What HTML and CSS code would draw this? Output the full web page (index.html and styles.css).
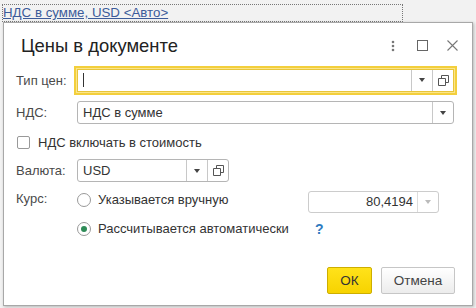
FILE: index.html
```html
<!DOCTYPE html>
<html lang="ru">
<head>
<meta charset="UTF-8">
<title>Цены в документе</title>
<link rel="stylesheet" href="styles.css">
</head>
<body>

<div class="topbar">
  <a class="link" href="#">НДС в сумме, USD &lt;Авто&gt;</a>
</div>

<div class="dialog">
  <div class="head">
    <div class="title">Цены в документе</div>
    <div class="tools">
      <span class="tool">
        <svg width="4" height="12" viewBox="0 0 4 12"><circle cx="2" cy="2" r="1.3" fill="#777"/><circle cx="2" cy="6" r="1.3" fill="#777"/><circle cx="2" cy="10" r="1.3" fill="#777"/></svg>
      </span>
      <span class="tool">
        <svg width="11" height="11" viewBox="0 0 11 11"><rect x="0.5" y="0.5" width="10" height="10" fill="none" stroke="#666"/></svg>
      </span>
      <span class="tool">
        <svg width="11" height="11" viewBox="0 0 11 11"><path d="M0.5 0.5L10.5 10.5M10.5 0.5L0.5 10.5" stroke="#777" stroke-width="1.1"/></svg>
      </span>
    </div>
  </div>

  <div class="form">
    <div class="row r1">
      <label class="lbl">Тип цен:</label>
      <div class="field focus wide">
        <div class="val"><span class="caret"></span></div>
        <span class="btn"><i class="arrow"></i></span>
        <span class="btn"><svg width="11" height="11" viewBox="0 0 11 11"><path d="M3.5 3.5V0.5H10.5V7.5H7.5M0.5 3.5H7.5V10.5H0.5Z" fill="none" stroke="#555"/></svg></span>
      </div>
    </div>

    <div class="row r2">
      <label class="lbl">НДС:</label>
      <div class="field wide">
        <div class="val">НДС в сумме</div>
        <span class="btn"><i class="arrow"></i></span>
      </div>
    </div>

    <div class="row r3">
      <span class="check"></span>
      <span class="text">НДС включать в стоимость</span>
    </div>

    <div class="row r4">
      <label class="lbl">Валюта:</label>
      <div class="field small">
        <div class="val">USD</div>
        <span class="btn"><i class="arrow"></i></span>
        <span class="btn"><svg width="11" height="11" viewBox="0 0 11 11"><path d="M3.5 3.5V0.5H10.5V7.5H7.5M0.5 3.5H7.5V10.5H0.5Z" fill="none" stroke="#555"/></svg></span>
      </div>
    </div>

    <div class="row r5">
      <label class="lbl">Курс:</label>
      <div class="radios">
        <div class="opt">
          <span class="radio"></span>
          <span class="text">Указывается вручную</span>
        </div>
        <div class="field num">
          <div class="val">80,4194</div>
          <span class="btn"><i class="arrow off"></i></span>
        </div>
        <div class="opt">
          <span class="radio on"></span>
          <span class="text">Рассчитывается автоматически</span>
        </div>
        <div class="help">?</div>
      </div>
    </div>
  </div>

  <div class="foot">
    <button class="ok">ОК</button>
    <button class="cancel">Отмена</button>
  </div>
</div>

</body>
</html>
```

FILE: styles.css
```css
body { margin:0; background:#f2f2f2; font-family:"Liberation Sans", Arial, sans-serif; font-size:13px; color:#333; width:476px; height:308px; overflow:hidden; }

.topbar { height:22px; padding:4px 0 0 2px; box-sizing:border-box; }
.link { display:block; width:401px; height:18px; border:1px dotted #777; color:#3c5b9a; text-decoration:underline; line-height:15px; box-sizing:border-box; font-size:13.3px; }

.dialog { margin:0 0 0 3px; width:470px; height:284px; background:#fff; border:1px solid #a8a8a8; box-shadow:1px 1px 3px rgba(0,0,0,.25); box-sizing:border-box; display:flex; flex-direction:column; }

.head { display:flex; align-items:center; height:45px; padding:0 14px 0 17px; }
.title { flex:1; font-size:18.4px; color:#222; padding-top:1px; }
.tools { display:flex; align-items:center; gap:19px; }
.tool { display:flex; width:11px; justify-content:center; }

.form { padding:0 0 0 12px; }
.row { display:flex; align-items:center; }
.lbl { width:61px; color:#4a4a4a; }
.r1 { height:22px; margin-top:1px; }
.r2 { height:23px; margin-top:10px; }
.r3 { height:20px; margin-top:8px; padding-left:1px; }
.r4 { height:23px; margin-top:7px; }
.r5 { align-items:flex-start; margin-top:7px; }
.r5 .lbl { padding-top:2px; }

.field { display:flex; height:23px; border:1px solid #b5b5b5; border-radius:3px; box-sizing:border-box; background:#fff; }
.field .val { flex:1; padding-left:5px; line-height:21px; color:#333; }
.field .btn { width:20px; border-left:1px solid #c8c8c8; display:flex; align-items:center; justify-content:center; }
.wide { width:377px; }
.small { width:152px; }
.focus { border-color:#e8c53a; box-shadow:0 0 0 1px #fbe58a, 0 0 0 3px #f3cf3c; border-radius:0; }
.caret { display:inline-block; width:1px; height:14px; background:#333; vertical-align:middle; margin-top:-2px; }

.arrow { width:0; height:0; border-left:3.5px solid transparent; border-right:3.5px solid transparent; border-top:4px solid #444; }
.arrow.off { border-top-color:#bbb; }

.check { width:13px; height:13px; border:1px solid #999; border-radius:2px; box-sizing:border-box; margin-right:8px; }

.radios { display:grid; grid-template-columns:231px 131px; row-gap:5px; }
.opt { display:flex; align-items:center; height:21px; }
.radio { width:14px; height:14px; border:1px solid #999; border-radius:50%; box-sizing:border-box; margin-right:7px; display:flex; align-items:center; justify-content:center; }
.radio.on::after { content:""; width:6px; height:6px; border-radius:50%; background:#2e8b57; }
.num { margin-top:2px; height:22px; border-color:#ccc; }
.num .val { text-align:right; padding-right:4px; line-height:20px; }
.num .btn { border-left-color:#ddd; }
.help { color:#2f7bc0; font-size:14px; font-weight:bold; padding:3px 0 0 7px; }

.foot { margin-top:auto; display:flex; justify-content:flex-end; gap:9px; padding:0 17px 11px 0; }
.foot button { height:27px; font-family:"Liberation Sans", Arial, sans-serif; font-size:13.5px; border-radius:2px; padding:0; }
.ok { width:45px; background:linear-gradient(#ffe21a,#f7d300); border:1px solid #cdae00; color:#333; }
.cancel { width:74px; background:linear-gradient(#fff,#ececec); border:1px solid #c6c6c6; color:#444; }
```
